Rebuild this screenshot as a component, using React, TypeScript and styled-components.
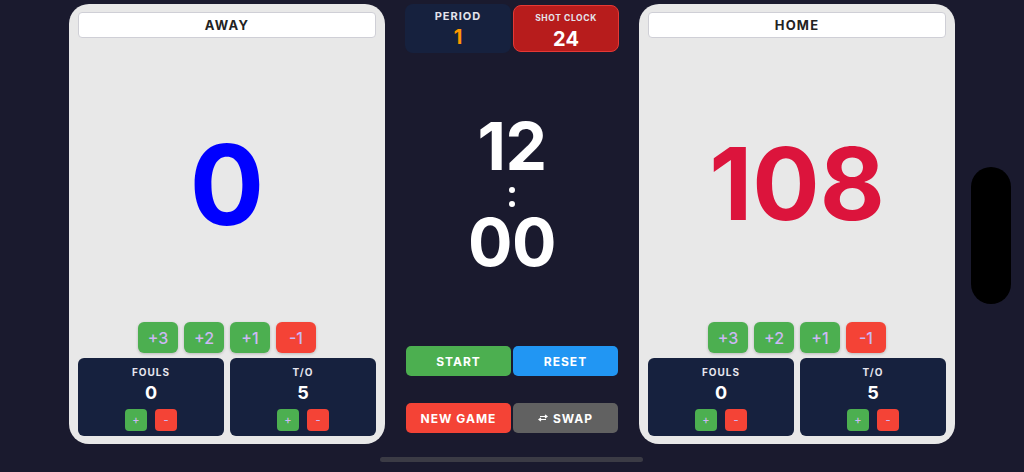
import React from 'react'
import styled, { createGlobalStyle } from 'styled-components'

const GlobalStyle = createGlobalStyle`
  html, body {
    margin: 0;
    padding: 0;
    background: #1a1a2e;
    font-family: Inter, 'Noto Sans', 'Liberation Sans', sans-serif;
  }
  * { box-sizing: border-box; }
`

const Screen = styled.div`
  position: relative;
  width: 1024px;
  height: 472px;
  overflow: hidden;
  background: #1a1a2e;
  display: flex;
  align-items: flex-start;
  justify-content: center;
  gap: 20px;
  padding-top: 4px;
`

const TeamPanel = styled.section`
  width: 316px;
  height: 440px;
  background: #e8e8e8;
  border-radius: 20px;
  padding: 8px 9px 8px;
  display: flex;
  flex-direction: column;
`

const TeamName = styled.div`
  height: 26px;
  background: #fff;
  border: 1px solid #cfcfd6;
  border-radius: 4px;
  display: flex;
  align-items: center;
  justify-content: center;
  font-size: 13px;
  font-weight: 700;
  letter-spacing: 1.2px;
  color: #222;
`

const ScoreArea = styled.div`
  flex: 1;
  display: flex;
  align-items: center;
  justify-content: center;
  padding-top: 8px;
`

const Score = styled.div<{ $color: string; $size: number }>`
  font-size: ${p => p.$size}px;
  font-weight: 700;
  line-height: 1;
  color: ${p => p.$color};
`

const PointRow = styled.div`
  display: flex;
  justify-content: center;
  gap: 6px;
  margin-bottom: 5px;
`

const PointButton = styled.button<{ $minus?: boolean }>`
  width: 40px;
  height: 31px;
  border: none;
  border-radius: 6px;
  background: ${p => (p.$minus ? '#f44336' : '#4caf50')};
  color: #cdb8f4;
  font-family: inherit;
  font-size: 16px;
  font-weight: 500;
  box-shadow: 0 1px 3px rgba(0, 0, 0, 0.2);
  padding: 0;
`

const StatRow = styled.div`
  display: grid;
  grid-template-columns: 1fr 1fr;
  gap: 6px;
`

const StatBox = styled.div`
  height: 78px;
  background: #16213e;
  border-radius: 6px;
  display: flex;
  flex-direction: column;
  align-items: center;
  padding-top: 8px;
`

const StatLabel = styled.div`
  font-size: 10px;
  font-weight: 700;
  letter-spacing: 1px;
  color: #e6e6ee;
  line-height: 12px;
`

const StatValue = styled.div`
  font-size: 18px;
  font-weight: 700;
  color: #fff;
  line-height: 22px;
  margin-top: 4px;
`

const StatButtons = styled.div`
  display: flex;
  gap: 8px;
  margin-top: 5px;
`

const SmallButton = styled.button<{ $minus?: boolean }>`
  width: 22px;
  height: 22px;
  border: none;
  border-radius: 4px;
  padding: 0;
  background: ${p => (p.$minus ? '#f44336' : '#4caf50')};
  color: #cdb8f4;
  font-family: inherit;
  font-size: 11px;
  font-weight: 500;
`

const Center = styled.div`
  width: 214px;
  height: 440px;
  display: flex;
  flex-direction: column;
`

const InfoRow = styled.div`
  display: grid;
  grid-template-columns: 1fr 1fr;
  gap: 2px;
`

const InfoBox = styled.div<{ $shot?: boolean }>`
  height: ${p => (p.$shot ? '47px' : '49px')};
  margin-top: ${p => (p.$shot ? '1px' : '0')};
  border-radius: 8px;
  background: ${p => (p.$shot ? '#b71c1c' : '#16213e')};
  border: ${p => (p.$shot ? '1px solid #e53935' : 'none')};
  display: flex;
  flex-direction: column;
  align-items: center;
  padding-top: 6px;
`

const InfoLabel = styled.div<{ $small?: boolean }>`
  font-size: ${p => (p.$small ? '8.5px' : '11px')};
  font-weight: 700;
  letter-spacing: ${p => (p.$small ? '0.6px' : '1px')};
  color: #e4e4ec;
  line-height: 13px;
`

const InfoValue = styled.div<{ $color: string }>`
  font-size: 20px;
  font-weight: 700;
  color: ${p => p.$color};
  line-height: 24px;
  margin-top: 2px;
`

const Clock = styled.div`
  flex: 1;
  min-height: 0;
  display: flex;
  flex-direction: column;
  align-items: center;
  justify-content: center;
  color: #fff;
  font-weight: 700;
  padding-bottom: 12px;
`

const ClockDigits = styled.div`
  font-size: 66px;
  line-height: 50px;
  height: 50px;
  letter-spacing: -0.5px;
`

const ClockColon = styled.div`
  display: flex;
  flex-direction: column;
  gap: 8px;
  margin: 16px 0 10px;

  span {
    width: 6px;
    height: 6px;
    border-radius: 50%;
    background: #fff;
  }
`

const Controls = styled.div`
  display: grid;
  grid-template-columns: 105px 105px;
  justify-content: center;
  column-gap: 2px;
  row-gap: 27px;
  padding-bottom: 11px;
`

const ControlButton = styled.button<{ $bg: string }>`
  height: 30px;
  border: none;
  border-radius: 5px;
  background: ${p => p.$bg};
  color: #fff;
  font-family: inherit;
  font-size: 12px;
  font-weight: 700;
  letter-spacing: 1px;
  display: flex;
  align-items: center;
  justify-content: center;
  gap: 5px;
  padding: 0;
`

const Camera = styled.div`
  position: absolute;
  left: 971px;
  top: 167px;
  width: 40px;
  height: 137px;
  border-radius: 20px;
  background: #000;
`

const HomeIndicator = styled.div`
  position: absolute;
  left: 380px;
  top: 457px;
  width: 263px;
  height: 5px;
  border-radius: 3px;
  background: #3b3b45;
`

const SwapIcon = () => (
  <svg width="10" height="8" viewBox="0 0 10 8" fill="none" stroke="#fff" strokeWidth="1.2">
    <path d="M2 2.5h7M7 1l2 1.5L7 4" />
    <path d="M8 5.5H1M3 4L1 5.5 3 7" />
  </svg>
)

interface TeamProps {
  name: string
  score: number
  color: string
  fouls: number
  timeouts: number
}

const Team = ({ name, score, color, fouls, timeouts }: TeamProps) => {
  const digits = String(score).length
  const size = digits >= 3 ? 100 : 111
  return (
    <TeamPanel>
      <TeamName>{name}</TeamName>
      <ScoreArea>
        <Score $color={color} $size={size}>
          {score}
        </Score>
      </ScoreArea>
      <PointRow>
        <PointButton>+3</PointButton>
        <PointButton>+2</PointButton>
        <PointButton>+1</PointButton>
        <PointButton $minus>-1</PointButton>
      </PointRow>
      <StatRow>
        <StatBox>
          <StatLabel>FOULS</StatLabel>
          <StatValue>{fouls}</StatValue>
          <StatButtons>
            <SmallButton>+</SmallButton>
            <SmallButton $minus>-</SmallButton>
          </StatButtons>
        </StatBox>
        <StatBox>
          <StatLabel>T/O</StatLabel>
          <StatValue>{timeouts}</StatValue>
          <StatButtons>
            <SmallButton>+</SmallButton>
            <SmallButton $minus>-</SmallButton>
          </StatButtons>
        </StatBox>
      </StatRow>
    </TeamPanel>
  )
}

export default function App() {
  return (
    <>
      <GlobalStyle />
      <Screen>
        <Team name="AWAY" score={0} color="#0000ff" fouls={0} timeouts={5} />
        <Center>
          <InfoRow>
            <InfoBox>
              <InfoLabel>PERIOD</InfoLabel>
              <InfoValue $color="#ff9800">1</InfoValue>
            </InfoBox>
            <InfoBox $shot>
              <InfoLabel $small>SHOT CLOCK</InfoLabel>
              <InfoValue $color="#fff">24</InfoValue>
            </InfoBox>
          </InfoRow>
          <Clock>
            <ClockDigits>12</ClockDigits>
            <ClockColon>
              <span />
              <span />
            </ClockColon>
            <ClockDigits>00</ClockDigits>
          </Clock>
          <Controls>
            <ControlButton $bg="#4caf50">START</ControlButton>
            <ControlButton $bg="#2196f3">RESET</ControlButton>
            <ControlButton $bg="#f44336">NEW GAME</ControlButton>
            <ControlButton $bg="#616161">
              <SwapIcon />
              SWAP
            </ControlButton>
          </Controls>
        </Center>
        <Team name="HOME" score={108} color="#dc143c" fouls={0} timeouts={5} />
        <Camera />
        <HomeIndicator />
      </Screen>
    </>
  )
}
